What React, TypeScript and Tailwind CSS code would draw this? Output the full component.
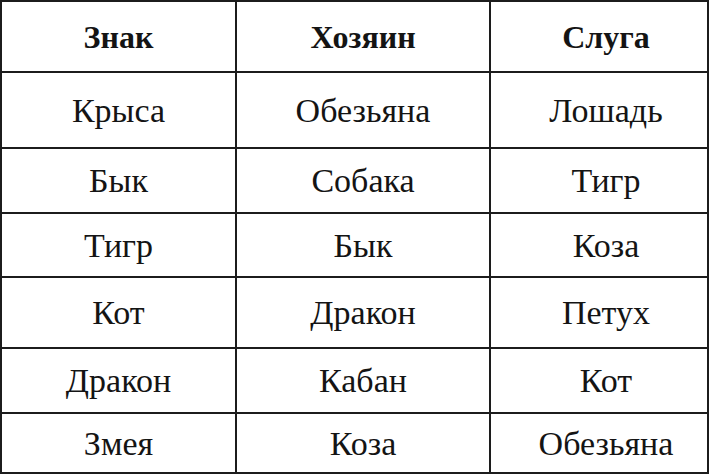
const header = ["Знак", "Хозяин", "Слуга"];

const rows: string[][] = [
  ["Крыса", "Обезьяна", "Лошадь"],
  ["Бык", "Собака", "Тигр"],
  ["Тигр", "Бык", "Коза"],
  ["Кот", "Дракон", "Петух"],
  ["Дракон", "Кабан", "Кот"],
  ["Змея", "Коза", "Обезьяна"],
];

export default function App() {
  return (
    <div className="w-[710px] h-[476px] bg-white">
      <div className="grid w-[709px] grid-cols-[233px_252px_216px] grid-rows-[69px_74px_63px_62px_69px_63px_58px] gap-[2px] border-2 border-[#1c1c1c] bg-[#1c1c1c] font-['Liberation_Serif',serif] text-[#141414]">
        {header.map((h, i) => (
          <div
            key={h}
            className={`flex items-center justify-center bg-white text-[32px] font-bold ${i === 2 ? "pl-[14px]" : ""}`}
          >
            {h}
          </div>
        ))}
        {rows.map((r, ri) =>
          r.map((c, ci) => (
            <div
              key={ri + "-" + ci}
              className={`flex items-center justify-center bg-white text-[34px] ${ci === 2 ? "pl-[14px]" : ""}`}
            >
              {c}
            </div>
          ))
        )}
      </div>
    </div>
  );
}
